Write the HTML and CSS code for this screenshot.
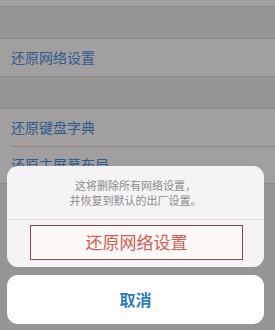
FILE: index.html
```html
<!DOCTYPE html>
<html lang="zh-CN">
<head>
  <meta charset="UTF-8">
  <meta name="viewport" content="width=device-width, initial-scale=1">
  <link rel="stylesheet" href="styles.css">
</head>
<body>
  <div class="screen">
    <div class="group group-top">
      <div class="row row-stub"></div>
    </div>
    <div class="group">
      <div class="row">还原网络设置</div>
    </div>
    <div class="group">
      <div class="row">还原键盘字典</div>
      <div class="row">还原主屏幕布局</div>
    </div>

    <div class="sheet">
      <div class="sheet-main">
        <p class="sheet-msg">这将删除所有网络设置，<br>并恢复到默认的出厂设置。</p>
        <div class="sheet-action">
          <div class="mark">还原网络设置</div>
        </div>
      </div>
      <div class="sheet-cancel">取消</div>
    </div>
  </div>
</body>
</html>
```

FILE: styles.css
```css
* {
  margin: 0;
  padding: 0;
  box-sizing: border-box;
}
html, body {
  height: 100%;
  background-color: #979496;
  font-family: "Noto Sans CJK SC", "Noto Sans", sans-serif;
}
.screen {
  position: relative;
  width: 275px;
  height: 330px;
  overflow: hidden;
}
/* 设置列表 */
.group {
  margin-top: 30px;
  background-color: #a29fa1;
  border-top: 1px solid #8b898b;
  border-bottom: 1px solid #8b898b;
}
.group-top {
  margin-top: 0;
  border-top: 0;
}
.group + .group {
  margin-top: 31px;
}
.row {
  height: 37px;
  padding-left: 11px;
  line-height: 37px;
  font-size: 14px;
  color: #2f5a8c;
}
.row-stub {
  height: 6px;
}
.row + .row {
  position: relative;
}
.row + .row::before {
  content: '';
  position: absolute;
  top: 0;
  left: 11px;
  right: 0;
  height: 1px;
  background-color: #8b898b;
}
/* 底部操作表 */
.sheet {
  position: absolute;
  left: 7px;
  right: 11px;
  top: 166px;
  display: flex;
  flex-direction: column;
  gap: 8px;
}
.sheet-main {
  border-radius: 11px;
  background-color: #f6f3f6;
  overflow: hidden;
}
.sheet-msg {
  height: 54px;
  padding-top: 12px;
  text-align: center;
  font-size: 11px;
  line-height: 15px;
  color: #8d8a8c;
  border-bottom: 1px solid #e2dfe2;
}
.sheet-action {
  height: 47px;
  padding: 5px 21px 0 23px;
}
.mark {
  height: 35px;
  border: 1.5px solid #86484a;
  background-color: #fbf8f6;
  text-align: center;
  line-height: 32px;
  font-size: 17px;
  color: #cf5d58;
}
.sheet-cancel {
  height: 49px;
  border-radius: 11px;
  background-color: #fdfdfd;
  text-align: center;
  line-height: 49px;
  font-size: 16px;
  font-weight: bold;
  color: #2f7cb9;
}
```
